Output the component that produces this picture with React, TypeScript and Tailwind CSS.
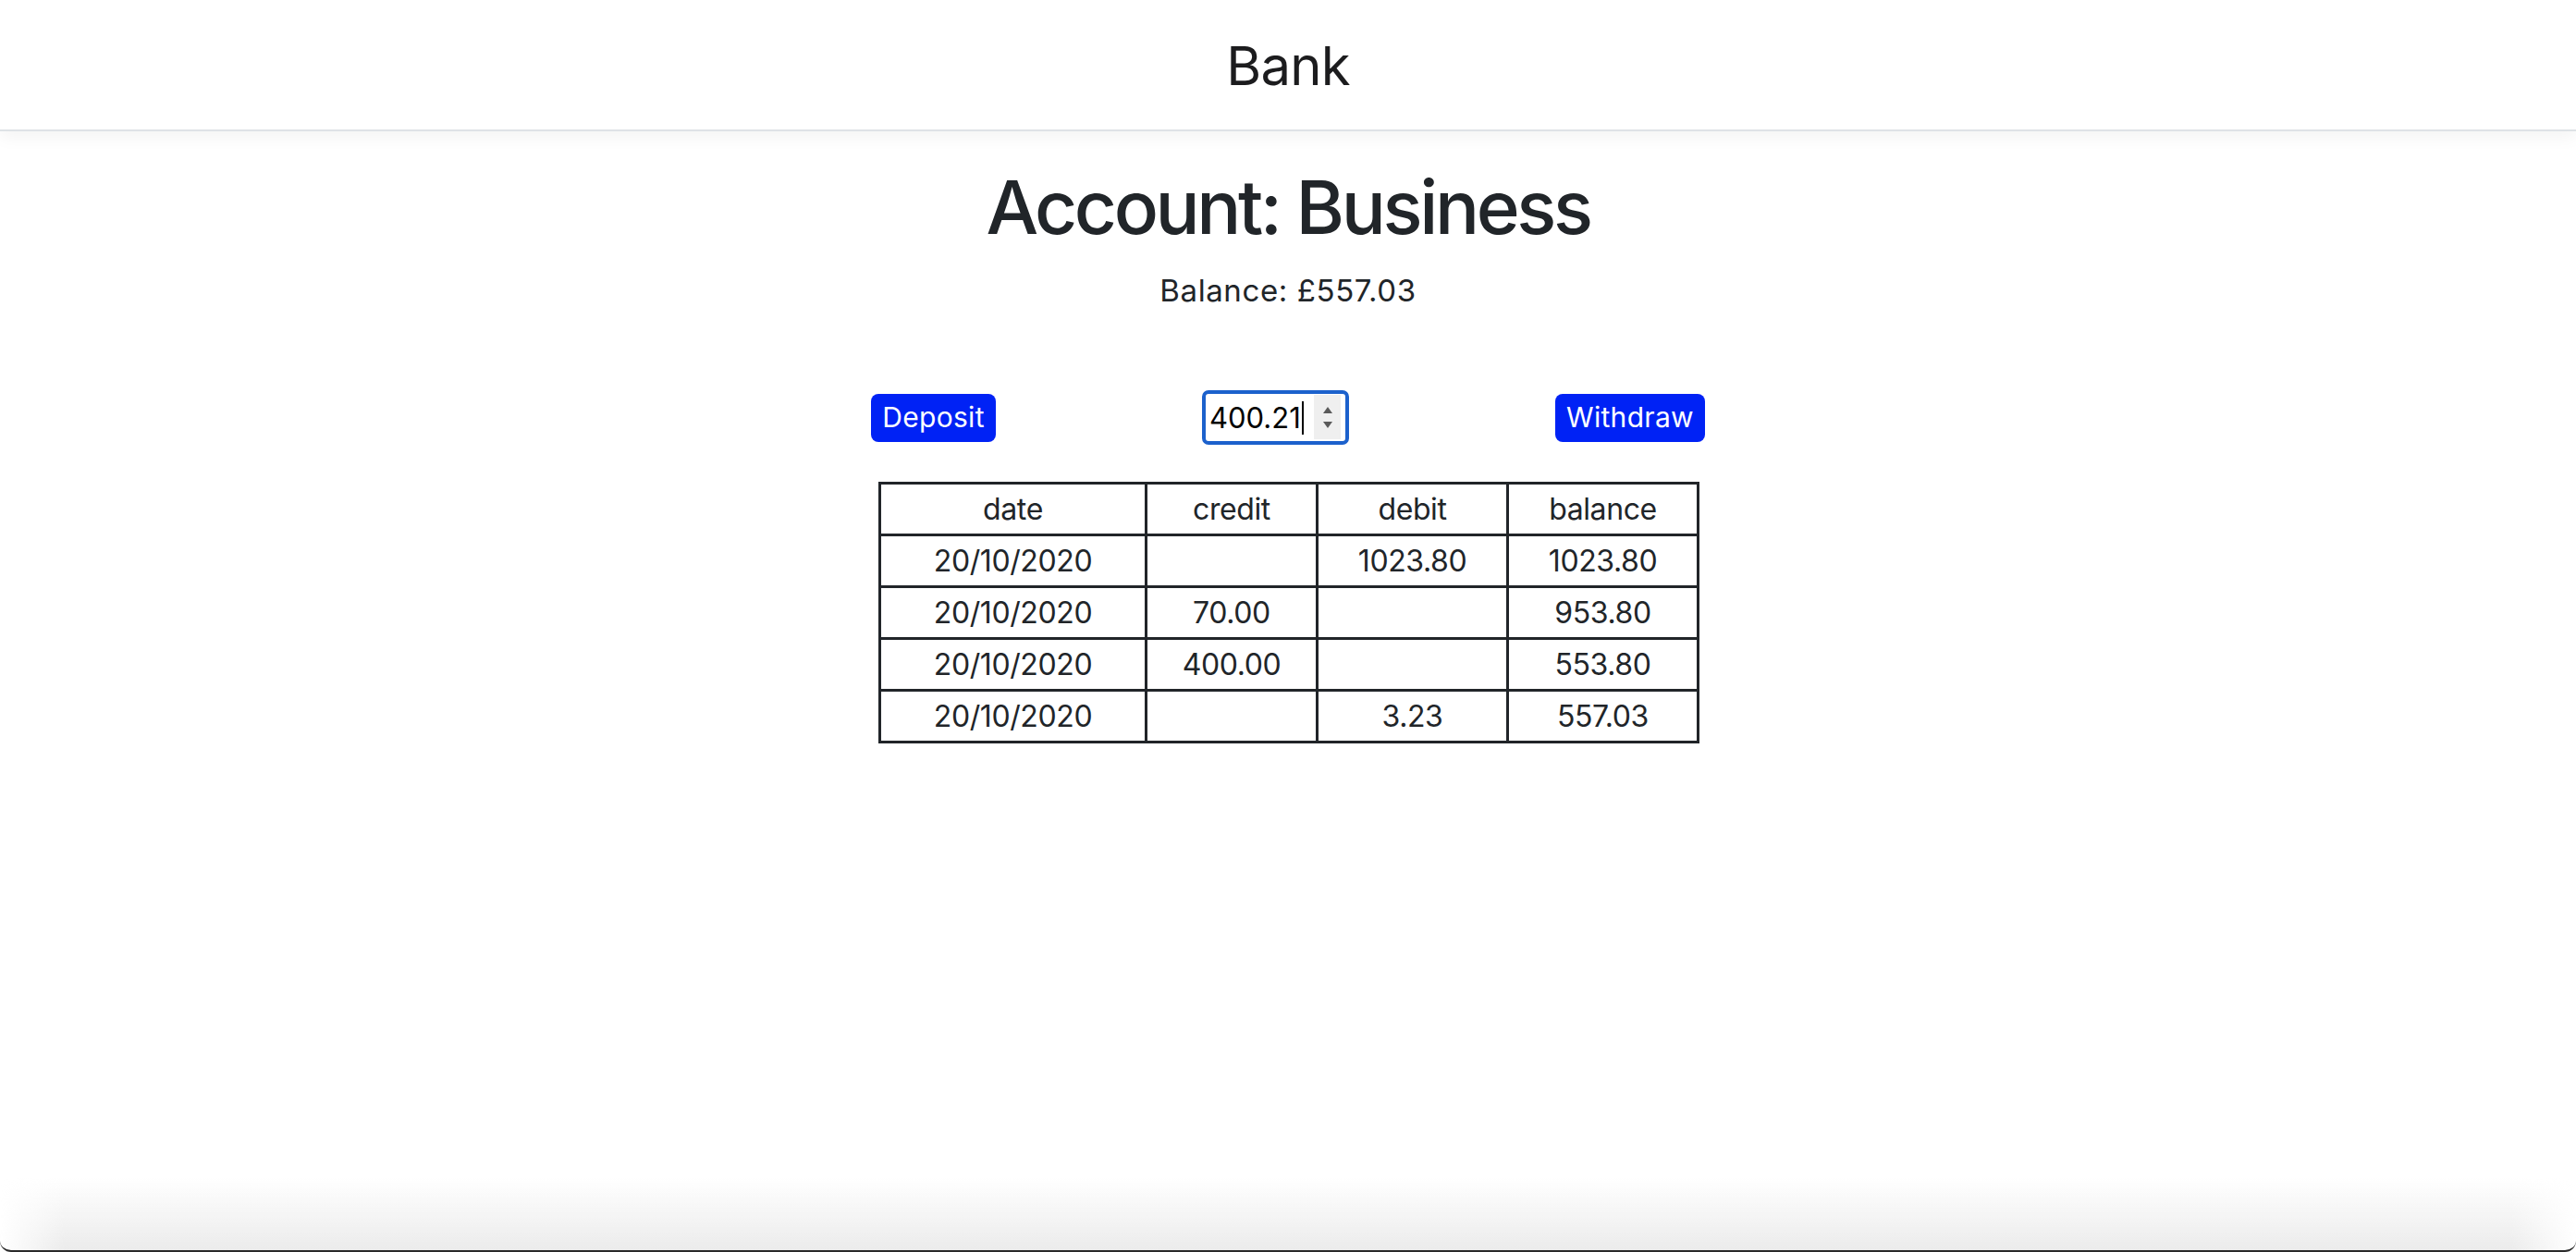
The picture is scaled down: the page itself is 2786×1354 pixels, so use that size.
import React from "react";

const rows = [
  { date: "20/10/2020", credit: "", debit: "1023.80", balance: "1023.80" },
  { date: "20/10/2020", credit: "70.00", debit: "", balance: "953.80" },
  { date: "20/10/2020", credit: "400.00", debit: "", balance: "553.80" },
  { date: "20/10/2020", credit: "", debit: "3.23", balance: "557.03" },
];

export default function App() {
  return (
    <div
      className="relative h-[1354px] overflow-hidden bg-white text-[#212529]"
      style={{ fontFamily: "Inter, 'Noto Sans', sans-serif" }}
    >
      <header className="relative z-10 flex h-[142px] items-center justify-center border-b-2 border-[#dee2e6] bg-white shadow-[0_6px_18px_rgba(0,0,0,0.05)]">
        <span className="mt-[2px] text-[58px] leading-none tracking-[-0.8px] text-[#1c1c1e]">Bank</span>
      </header>

      <main className="flex flex-col items-center">
        <h1 className="mt-[34px] text-[80px] font-medium leading-[96px] tracking-[-3.4px]">
          Account: Business
        </h1>
        <p className="mt-[18px] text-[33px] leading-[48px] tracking-[0.6px]">Balance: £557.03</p>

        <div className="mt-[84px] flex h-[59px] w-[902px] items-center justify-between">
          <button className="flex h-[52px] w-[135px] items-center justify-center rounded-[8px] bg-[#0022f5] text-[30px] tracking-[0.3px] text-white">
            Deposit
          </button>

          <div className="relative flex h-[59px] w-[159px] items-center rounded-[7px] border-[4px] border-[#1c61cc] bg-white pl-[4px]">
            <span className="text-[31px] leading-none text-black">400.21</span>
            <span className="ml-[1px] h-[36px] w-[2px] bg-black" />
            <div className="absolute right-[5px] top-[1px] flex h-[48px] w-[29px] flex-col items-center justify-center gap-[9px] bg-[#efefef]">
              <svg width="10" height="7" viewBox="0 0 10 7">
                <path d="M5 0 L10 7 L0 7 Z" fill="#5a5a5a" />
              </svg>
              <svg width="10" height="7" viewBox="0 0 10 7">
                <path d="M0 0 L10 0 L5 7 Z" fill="#5a5a5a" />
              </svg>
            </div>
          </div>

          <button className="flex h-[52px] w-[162px] items-center justify-center rounded-[8px] bg-[#0022f5] text-[30px] tracking-[0.3px] text-white">
            Withdraw
          </button>
        </div>

        <table className="mt-[40px] ml-[2px] w-[885px] table-fixed border-collapse border-[3px] border-[#212529] text-center text-[32px] tracking-[-0.4px]">
          <colgroup>
            <col className="w-[288px]" />
            <col className="w-[185px]" />
            <col className="w-[206px]" />
            <col className="w-[206px]" />
          </colgroup>
          <thead>
            <tr>
              {["date", "credit", "debit", "balance"].map((h) => (
                <th
                  key={h}
                  className="border-[3px] border-[#212529] p-0 font-normal leading-[53px]"
                >
                  {h}
                </th>
              ))}
            </tr>
          </thead>
          <tbody>
            {rows.map((r, i) => (
              <tr key={i}>
                <td className="border-[3px] border-[#212529] p-0 leading-[53px]">{r.date}</td>
                <td className="border-[3px] border-[#212529] p-0 leading-[53px]">{r.credit}</td>
                <td className="border-[3px] border-[#212529] p-0 leading-[53px]">{r.debit}</td>
                <td className="border-[3px] border-[#212529] p-0 leading-[53px]">{r.balance}</td>
              </tr>
            ))}
          </tbody>
        </table>
      </main>

      <div className="pointer-events-none absolute bottom-0 left-0 right-0 h-[80px] bg-linear-to-b from-[#ffffff00] to-[#ebebeb] [mask-image:linear-gradient(to_right,transparent,black_70px,black_calc(100%-70px),transparent)]" />
      <div className="pointer-events-none absolute bottom-0 left-0 right-0 h-[24px] rounded-b-[12px] border-b-2 border-[#2a2a2a]" />
    </div>
  );
}
